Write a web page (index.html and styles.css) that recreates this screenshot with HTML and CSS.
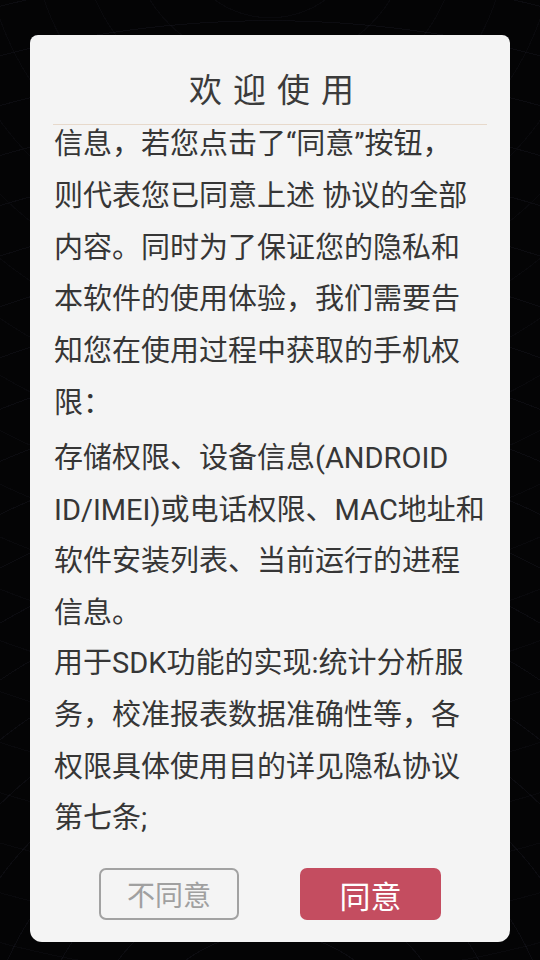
FILE: index.html
```html
<!DOCTYPE html>
<html lang="zh-CN">
<head>
<meta charset="utf-8">
<title>欢迎使用</title>
<link rel="stylesheet" href="styles.css">
</head>
<body>
<div class="screen">
  <div class="dialog">
    <div class="dialog-title">欢迎使用</div>
    <div class="divider"></div>
    <div class="dialog-body">
      <div class="body-content">
        <p class="para">信息，若您点击了“同意”按钮，<br>则代表您已同意上述 协议的全部<br>内容。同时为了保证您的隐私和<br>本软件的使用体验，我们需要告<br>知您在使用过程中获取的手机权<br>限：</p>
        <p class="para para-2">存储权限、设备信息(ANDROID<br>ID/IMEI)或电话权限、MAC地址和<br>软件安装列表、当前运行的进程<br>信息。</p>
        <p class="para para-3">用于SDK功能的实现:统计分析服<br>务，校准报表数据准确性等，各<br>权限具体使用目的详见隐私协议<br>第七条;</p>
      </div>
    </div>
    <div class="dialog-actions">
      <button class="btn btn-decline" type="button">不同意</button>
      <button class="btn btn-accept" type="button">同意</button>
    </div>
  </div>
</div>
</body>
</html>
```
FILE: styles.css
```css
* {
  box-sizing: border-box;
}

html, body {
  margin: 0;
  padding: 0;
}

body {
  width: 540px;
  height: 960px;
  overflow: hidden;
  background-color: #040405;
  font-family: Roboto, "Noto Sans CJK SC", sans-serif;
}

.screen {
  width: 540px;
  height: 960px;
  padding-top: 35px;
  background-image:
    repeating-radial-gradient(circle at 50% 112%, rgba(0,0,0,0) 0 46px, rgba(40,40,56,0.22) 46px 47px, rgba(0,0,0,0) 47px 48px),
    repeating-radial-gradient(circle at 50% -8%, rgba(0,0,0,0) 0 46px, rgba(40,40,56,0.14) 46px 47px, rgba(0,0,0,0) 47px 48px);
}

.dialog {
  width: 480px;
  height: 907px;
  margin: 0 auto;
  background: #f4f4f4;
  border-radius: 8px 8px 12px 12px;
  display: flex;
  flex-direction: column;
  overflow: hidden;
}

.dialog-title {
  padding: 36px 0 13px 14px;
  height: 89px;
  line-height: 40px;
  font-size: 33px;
  letter-spacing: 11px;
  text-align: center;
  color: #3b3b3b;
}

.divider {
  height: 1px;
  margin: 0 23px;
  background: #e7d9cb;
  flex-shrink: 0;
}

.dialog-body {
  flex: 1;
  overflow: hidden;
  padding: 0 23px 0 24px;
}

.body-content {
  margin-top: -6px;
}

.para {
  margin: 0;
  font-size: 29px;
  line-height: 51.8px;
  color: #363636;
  white-space: nowrap;
}

.para-2 {
  margin-top: 3px;
}

.para-3 {
  margin-top: -2px;
}

.dialog-actions {
  flex-shrink: 0;
  height: 74px;
  padding-bottom: 22px;
  display: flex;
  justify-content: center;
  gap: 61px;
}

.btn {
  margin: 0;
  padding: 0;
  height: 52px;
  font-family: Roboto, "Noto Sans CJK SC", sans-serif;
  display: flex;
  align-items: center;
  justify-content: center;
  cursor: pointer;
}

.btn-decline {
  width: 140px;
  border: 2px solid #a2a2a2;
  border-radius: 7px;
  background: transparent;
  color: #a0a0a0;
  font-size: 28px;
}

.btn-accept {
  width: 141px;
  border: none;
  border-radius: 7px;
  background: #c44d60;
  color: #ffffff;
  font-size: 31px;
}
```
